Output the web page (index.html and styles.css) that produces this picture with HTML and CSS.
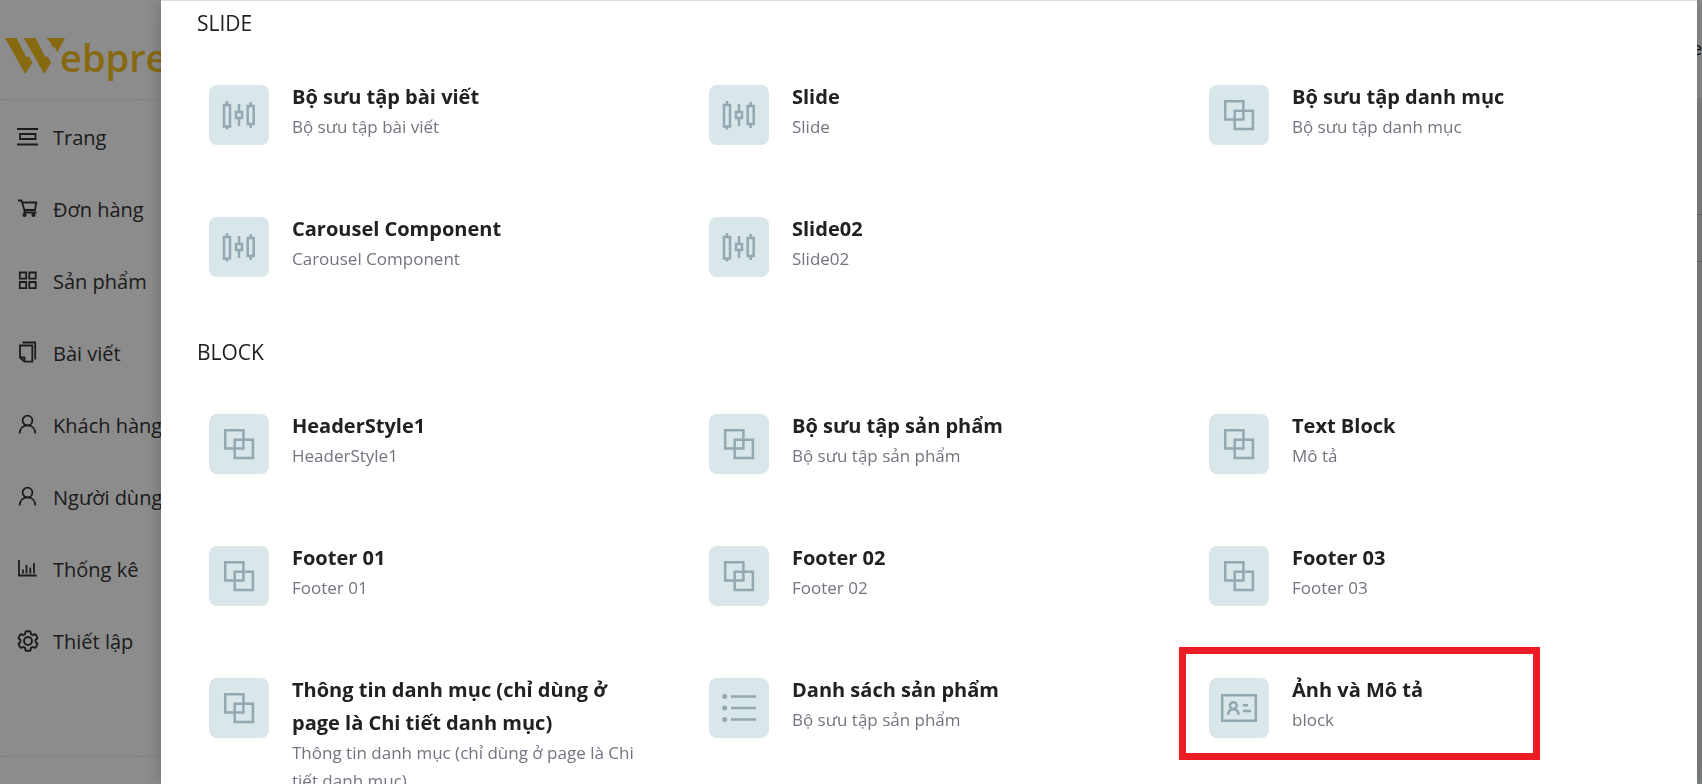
FILE: index.html
```html
<!DOCTYPE html>
<html lang="vi">
<head>
<meta charset="utf-8">
<meta name="viewport" content="width=device-width, initial-scale=1">
<title>Webpress</title>
<link rel="stylesheet" href="styles.css">
</head>
<body>
<svg class="sprite" aria-hidden="true">
  <symbol id="slide" viewBox="0 0 60 60">
    <path d="M15 20h6v21.500H15zM18 16v4M18 41.500v3M30 19v8M30 33v8M27 27h6v6h-6zM38.700 21h6v18h-6zM41.700 17v4M41.700 39v4"/>
  </symbol>
  <symbol id="block" viewBox="0 0 60 60">
    <path d="M16.200 16.200h18.200v18.200H16.200zM25.700 25.700h18.200v18.200H25.700z"/>
  </symbol>
  <symbol id="list" viewBox="0 0 60 60">
    <path d="M22 18.500h25M22 30h25M22 41.500h25"/>
    <g fill="currentColor" stroke="none"><circle cx="15.700" cy="18.500" r="2.500"/><circle cx="15.700" cy="30" r="2.500"/><circle cx="15.700" cy="41.500" r="2.500"/></g>
  </symbol>
  <symbol id="idcard" viewBox="0 0 60 60">
    <path d="M13.200 17.200h33.600v25.600H13.200z"/>
    <circle cx="24.300" cy="27.600" r="3.400"/>
    <path d="M19 36.700c.5-3.500 2.500-5.400 5.300-5.400s4.900 1.900 5.400 5.400M34 27.200h5M34 33h8"/>
  </symbol>
  <symbol id="user" viewBox="0 0 24 24">
    <circle cx="11.500" cy="7.500" r="4.900"/><path d="M3.600 20.500c.3-4.900 3.400-8.100 7.900-8.100s7.600 3.200 7.900 8.100"/>
  </symbol>
</svg>

<div class="layout">
  <aside class="sidebar">
    <a class="logo" href="#" aria-label="Webpress">
      <svg class="logo-mark" viewBox="0 0 62 40" aria-hidden="true"><path d="M0 0h11.500L21.500 19.500l2-1.500 4 6.500L20.300 36zM18.700 0h12l9.800 19.500 2-1.500 3.500 6.500L39.300 36zM41.500 0H60l-7.800 14.500-2.500-5.500-2 .5-2.200-5z"/></svg>
      <span class="logo-text">ebpress</span>
    </a>
    <nav class="menu">
      <a class="menu-item" href="#"><svg class="menu-icon" viewBox="0 0 24 24"><path d="M1 4h21M1 19.500h21M4 9h15.500v5H4z"/></svg>Trang</a>
      <a class="menu-item" href="#"><svg class="menu-icon" viewBox="0 0 24 24"><path d="M2 3.500h3.500L9 15M6.300 5.500h14L19 13H8.500M7.500 15.500h13"/><circle cx="8.500" cy="18" r="1.200"/><circle cx="17.500" cy="18" r="1.200"/></svg>Đơn hàng</a>
      <a class="menu-item" href="#"><svg class="menu-icon" viewBox="0 0 24 24"><path d="M3.800 3.500h6.400v6.200H3.800zM13.300 3.500h6.400v6.200h-6.400zM3.800 13h6.400v6.200H3.800zM13.300 13h6.400v6.200h-6.400z"/></svg>Sản phẩm</a>
      <a class="menu-item" href="#"><svg class="menu-icon" viewBox="0 0 24 24"><path d="M6.500 1.500h12.700v17M4 4.500h12.300v16.200H8.500L4 16.500zM4 16.300h4.500v4.400"/></svg>Bài viết</a>
      <a class="menu-item" href="#"><svg class="menu-icon"><use href="#user"/></svg>Khách hàng</a>
      <a class="menu-item" href="#"><svg class="menu-icon"><use href="#user"/></svg>Người dùng</a>
      <a class="menu-item" href="#"><svg class="menu-icon" viewBox="0 0 24 24"><path d="M3 3v15.500h17.700M7 12.500v4M10.500 8v8.500M14.300 10.500v6M18 6v10.500"/></svg>Thống kê</a>
      <a class="menu-item" href="#"><svg class="menu-icon" viewBox="1 1 22 22"><path d="M9.594 3.940c.09-.542.56-.94 1.110-.94h2.593c.55 0 1.020.398 1.110.94l.213 1.281c.063.374.313.686.645.87.074.04.147.083.22.127.325.196.72.257 1.075.124l1.217-.456a1.125 1.125 0 0 1 1.370.49l1.296 2.247a1.125 1.125 0 0 1-.26 1.431l-1.003.827c-.293.241-.438.613-.43.992a7.723 7.723 0 0 1 0 .255c-.008.378.137.75.43.991l1.004.827c.424.35.534.955.26 1.430l-1.298 2.247a1.125 1.125 0 0 1-1.369.491l-1.217-.456c-.355-.133-.75-.072-1.076.124a6.470 6.470 0 0 1-.22.128c-.331.183-.581.495-.644.869l-.213 1.281c-.09.543-.56.94-1.110.94h-2.594c-.55 0-1.019-.398-1.110-.94l-.213-1.281c-.062-.374-.312-.686-.644-.87a6.520 6.520 0 0 1-.22-.127c-.325-.196-.72-.257-1.076-.124l-1.217.456a1.125 1.125 0 0 1-1.369-.49l-1.297-2.247a1.125 1.125 0 0 1 .26-1.431l1.004-.827c.292-.24.437-.613.43-.991a6.932 6.932 0 0 1 0-.255c.007-.38-.138-.751-.43-.992l-1.004-.827a1.125 1.125 0 0 1-.26-1.430l1.297-2.247a1.125 1.125 0 0 1 1.370-.491l1.216.456c.356.133.751.072 1.076-.124.072-.044.146-.086.22-.128.332-.183.582-.495.644-.869l.214-1.280Z"/><circle cx="12" cy="12" r="3.600"/></svg>Thiết lập</a>
    </nav>
    <div class="sidebar-foot"></div>
  </aside>
  <div class="page">
    <header class="page-header">e</header>
    <div class="page-body">
      <div class="table-title"></div>
      <div class="table-row"></div>
      <div class="table-body"></div>
    </div>
  </div>
</div>

<div class="mask"></div>
<main class="drawer">
  <section class="group">
    <h2 class="group-title">SLIDE</h2>
    <div class="cards">
      <article class="card"><span class="tile"><svg><use href="#slide"/></svg></span><div class="card-text"><h3>Bộ sưu tập bài viết</h3><p>Bộ sưu tập bài viết</p></div></article>
      <article class="card"><span class="tile"><svg><use href="#slide"/></svg></span><div class="card-text"><h3>Slide</h3><p>Slide</p></div></article>
      <article class="card"><span class="tile"><svg><use href="#block"/></svg></span><div class="card-text"><h3>Bộ sưu tập danh mục</h3><p>Bộ sưu tập danh mục</p></div></article>
      <article class="card"><span class="tile"><svg><use href="#slide"/></svg></span><div class="card-text"><h3>Carousel Component</h3><p>Carousel Component</p></div></article>
      <article class="card"><span class="tile"><svg><use href="#slide"/></svg></span><div class="card-text"><h3>Slide02</h3><p>Slide02</p></div></article>
    </div>
  </section>
  <section class="group">
    <h2 class="group-title">BLOCK</h2>
    <div class="cards">
      <article class="card"><span class="tile"><svg><use href="#block"/></svg></span><div class="card-text"><h3>HeaderStyle1</h3><p>HeaderStyle1</p></div></article>
      <article class="card"><span class="tile"><svg><use href="#block"/></svg></span><div class="card-text"><h3>Bộ sưu tập sản phẩm</h3><p>Bộ sưu tập sản phẩm</p></div></article>
      <article class="card"><span class="tile"><svg><use href="#block"/></svg></span><div class="card-text"><h3>Text Block</h3><p>Mô tả</p></div></article>
      <article class="card"><span class="tile"><svg><use href="#block"/></svg></span><div class="card-text"><h3>Footer 01</h3><p>Footer 01</p></div></article>
      <article class="card"><span class="tile"><svg><use href="#block"/></svg></span><div class="card-text"><h3>Footer 02</h3><p>Footer 02</p></div></article>
      <article class="card"><span class="tile"><svg><use href="#block"/></svg></span><div class="card-text"><h3>Footer 03</h3><p>Footer 03</p></div></article>
      <article class="card"><span class="tile"><svg><use href="#block"/></svg></span><div class="card-text"><h3>Thông tin danh mục (chỉ dùng ở page là Chi tiết danh mục)</h3><p>Thông tin danh mục (chỉ dùng ở page là Chi tiết danh mục)</p></div></article>
      <article class="card"><span class="tile"><svg><use href="#list"/></svg></span><div class="card-text"><h3>Danh sách sản phẩm</h3><p>Bộ sưu tập sản phẩm</p></div></article>
      <article class="card card-marked"><span class="tile"><svg><use href="#idcard"/></svg></span><div class="card-text"><h3>Ảnh và Mô tả</h3><p>block</p></div></article>
    </div>
  </section>
</main>
</body>
</html>
```

FILE: styles.css
```css
*, *::before, *::after { box-sizing: border-box; }

body {
  margin: 0;
  height: 100vh;
  overflow: hidden;
  font-family: "Open Sans", "Noto Sans", sans-serif;
  color: #212121;
}

.sprite { position: absolute; width: 0; height: 0; }

.layout {
  display: flex;
  height: 100vh;
}

.sidebar {
  display: flex;
  flex-direction: column;
  flex: 0 0 260px;
  background: #fff;
}

.logo {
  display: flex;
  flex: 0 0 100px;
  align-items: flex-start;
  padding: 24px 0 0 5px;
  border-bottom: 1px dashed #e8e8e8;
  color: #f5c020;
  text-decoration: none;
}

.logo-mark {
  width: 62px;
  height: 40px;
  margin-top: 14px;
  margin-right: -7px;
  fill: currentColor;
}

.logo-text {
  font-size: 38px;
  font-weight: 600;
  line-height: 66px;
}

.menu {
  flex: 1;
  padding-top: 1px;
}

.menu-item {
  display: flex;
  align-items: center;
  gap: 13px;
  height: 72px;
  padding-left: 16px;
  font-size: 20px;
  color: #333;
  text-decoration: none;
  white-space: nowrap;
}

.menu-icon {
  width: 24px;
  height: 24px;
  fill: none;
  stroke: currentColor;
  stroke-width: 1.8;
}

.sidebar-foot {
  height: 28px;
  border-top: 1px dashed #e8e8e8;
}

.page { flex: 1; background: #e9eeed; }

.page-header {
  height: 98px;
  padding-top: 36px;
  background: #fff;
  font-size: 18px;
  line-height: 24px;
  text-align: right;
}

.page-body { padding-top: 79px; }
.table-title { height: 38px; border-bottom: 1px solid #bbb; }
.table-row { height: 47px; border-bottom: 1px solid #bbb; }

.mask {
  position: fixed;
  inset: 0;
  background: rgba(0, 0, 0, .45);
}

.drawer {
  position: fixed;
  inset: 0 5px 0 161px;
  overflow: hidden;
  padding: 6px 0 0 36px;
  border-top: 1px solid #ddd;
  background: #fff;
  box-shadow: 0 0 18px rgba(0, 0, 0, .22);
}

.group { margin-bottom: 59px; }

.group-title {
  margin: 0 0 41px;
  font-size: 21px;
  font-weight: 500;
  line-height: 32px;
}

.cards {
  display: grid;
  grid-template-columns: repeat(3, 1fr);
  row-gap: 67px;
}

.card {
  position: relative;
  display: flex;
  align-items: flex-start;
  gap: 23px;
  padding: 0 44px 0 12px;
}

.card-marked::after {
  content: "";
  position: absolute;
  top: -26px;
  left: -18px;
  width: 361px;
  height: 113px;
  border: 7px solid #ec1c24;
}

.tile {
  flex: 0 0 60px;
  height: 60px;
  margin-top: 5px;
  border-radius: 8px;
  background: #d9e6ea;
  color: #93a8b0;
}

.tile svg {
  display: block;
  width: 60px;
  height: 60px;
  fill: none;
  stroke: currentColor;
  stroke-width: 2.5;
}

.card h3 {
  margin: 0;
  font-size: 20px;
  font-weight: 700;
  line-height: 33px;
}

.card p {
  margin: 0;
  font-size: 17px;
  line-height: 28px;
  color: #747480;
}
```
